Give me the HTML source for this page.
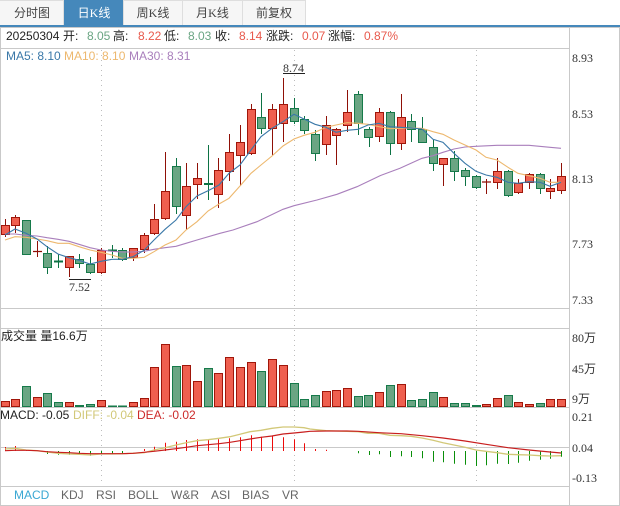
<!DOCTYPE html>
<html><head><meta charset="utf-8"><title>K</title>
<style>
html,body{margin:0;padding:0;background:#fff;width:620px;height:506px;overflow:hidden}
svg{display:block;position:absolute;left:0;top:0}
text{font-size:12px;font-family:"Liberation Sans","Noto Sans CJK SC",sans-serif;white-space:pre}
.s{font-family:"Liberation Serif","Noto Sans CJK SC",serif;fill:#333}
.t{font-family:"Liberation Serif","Noto Sans CJK SC",serif;fill:#444;text-anchor:middle}
.g{fill:#6aa583}.r{fill:#e8594c}.k{fill:#222}.b{fill:#666}
</style></head><body>
<svg width="620" height="506" viewBox="0 0 620 506" xmlns="http://www.w3.org/2000/svg">
<!-- tabs -->
<g fill="#f6f6f6" stroke="#dedede"><rect x="-1" y="0.5" width="64.5" height="25"/><rect x="123.5" y="0.5" width="59" height="25"/><rect x="182.5" y="0.5" width="60" height="25"/><rect x="242.5" y="0.5" width="63" height="25"/></g>
<rect x="64" y="0" width="59" height="26" fill="#4588bb"/>
<rect x="0" y="25" width="620" height="2" fill="#4588bb"/>
<text class="t" x="32" y="17">分时图</text><text class="t" x="94" y="17" style="fill:#fff">日K线</text><text class="t" x="153" y="17">周K线</text><text class="t" x="212.500" y="17">月K线</text><text class="t" x="274" y="17">前复权</text>
<!-- grid -->
<path d="M0.500 27V505.500M569.500 27V505.500M619.500 27V505.500M0 27.500H620M0 48.500H569M0 308.500H569M0 328.500H569M0 407.500H569M0 447.500H569M0 486.500H569M0 505.500H620" fill="none" stroke="#c9c9c9"/>
<path d="M101.500 50V484M294.500 50V484M476.500 50V484" fill="none" stroke="#bdbdbd" stroke-dasharray="1 4"/>
<!-- info -->
<text class="k" x="6" y="40">20250304</text><text class="k" x="63" y="40">开:</text><text class="g" x="87" y="40">8.05</text><text class="k" x="113" y="40">高:</text><text class="r" x="138" y="40">8.22</text><text class="k" x="164" y="40">低:</text><text class="g" x="188" y="40">8.03</text><text class="k" x="215" y="40">收:</text><text class="r" x="239" y="40">8.14</text><text class="k" x="266" y="40">涨跌:</text><text class="r" x="302" y="40">0.07</text><text class="k" x="328" y="40">涨幅:</text><text class="r" x="364" y="40">0.87%</text>
<text x="6" y="60" fill="#3a78a8">MA5: 8.10</text><text x="64" y="60" fill="#edb86e">MA10: 8.10</text><text x="129" y="60" fill="#a97fbc">MA30: 8.31</text>
<!-- axis -->
<text class="s" x="572" y="62">8.93</text><text class="s" x="572" y="118">8.53</text><text class="s" x="572" y="183">8.13</text><text class="s" x="572" y="248">7.73</text><text class="s" x="572" y="304">7.33</text>
<text class="s" x="283" y="72">8.74</text><path d="M283 73.500H305M69 279.500H91" stroke="#222" fill="none"/><text class="s" x="69" y="291">7.52</text>
<!-- wicks -->
<path fill="none" stroke="#8f1007" d="M5.500 219V237M15.500 215V233M37.500 241V257M69.500 256V277M101.500 248V274M133.500 248V261M144.500 233V253M154.500 204V235M165.500 152V220M186.500 163V230M197.500 163V199M218.500 158V208M229.500 134V181M240.500 125V186M251.500 104V155M272.500 104V155M283.500 78V142M326.500 116V155M336.500 128V165M347.500 90V132M379.500 108V142M401.500 94V150M443.500 158V186M486.500 179V194M497.500 158V189M518.500 179V194M529.500 173V189M550.500 179V199M561.500 163V194"/>
<path fill="none" stroke="#0c7244" d="M47.500 246V274M58.500 254V268M79.500 254V268M90.500 257V274M112.500 245V258M122.500 248V261M176.500 158V214M208.500 145V200M261.500 93V134M294.500 98V124M304.500 116V134M315.500 130V161M358.500 91V135M369.500 127V147M390.500 111V155M411.500 114V142M422.500 117V143M433.500 140V171M454.500 151V181M465.500 168V186M476.500 175V189M508.500 170V197M540.500 173V194"/>
<!-- bodies -->
<path fill="#ef5f4f" stroke="#a0160a" d="M1.500 225.500h8V234.500h-8zM11.500 217.500h8V225.500h-8zM65.500 256.500h8V267.500h-8zM97.500 250.500h8V272.500h-8zM129.500 248.500h8V257.500h-8zM140.500 235.500h8V249.500h-8zM150.500 219.500h8V233.500h-8zM161.500 191.500h8V218.500h-8zM182.500 186.500h8V215.500h-8zM193.500 178.500h8V184.500h-8zM214.500 170.500h8V194.500h-8zM225.500 152.500h8V171.500h-8zM236.500 142.500h8V155.500h-8zM247.500 109.500h8V153.500h-8zM268.500 109.500h8V128.500h-8zM279.500 104.500h8V123.500h-8zM322.500 125.500h8V144.500h-8zM332.500 129.500h8V135.500h-8zM343.500 112.500h8V125.500h-8zM375.500 112.500h8V136.500h-8zM397.500 117.500h8V143.500h-8zM439.500 158.500h8V164.500h-8zM493.500 171.500h8V182.500h-8zM514.500 183.500h8V192.500h-8zM525.500 174.500h8V182.500h-8zM546.500 188.500h8V191.500h-8zM557.500 176.500h8V190.500h-8z"/>
<path fill="#6aa583" stroke="#167a4a" d="M22.500 220.500h8V254.500h-8zM43.500 253.500h8V267.500h-8zM75.500 259.500h8V263.500h-8zM86.500 264.500h8V272.500h-8zM118.500 250.500h8V259.500h-8zM172.500 166.500h8V206.500h-8zM257.500 117.500h8V128.500h-8zM290.500 108.500h8V121.500h-8zM300.500 119.500h8V130.500h-8zM311.500 134.500h8V153.500h-8zM354.500 94.500h8V123.500h-8zM364.500 129.500h8V137.500h-8zM386.500 112.500h8V143.500h-8zM407.500 121.500h8V129.500h-8zM418.500 129.500h8V142.500h-8zM429.500 147.500h8V163.500h-8zM450.500 158.500h8V171.500h-8zM461.500 170.500h8V176.500h-8zM472.500 176.500h8V187.500h-8zM504.500 171.500h8V195.500h-8zM536.500 174.500h8V188.500h-8z"/>
<path fill="none" stroke="#8f1007" stroke-width="1.300" d="M33 251.500h9M482 182h9"/>
<path fill="none" stroke="#0c7244" stroke-width="2" d="M54 261.500h9M204 184h9M108 250.500h9"/>
<!-- MA -->
<polyline fill="none" stroke="#a97fbc" stroke-width="1.100" points="5,234 15,234 26,235.300 37,236 47,237.700 58,239.300 69,241.300 79,244.300 90,247.700 101,250 112,251.300 122,252 133,252 144,251.300 154,249.300 165,247.700 176,246.300 186,243.300 197,240 220,233.300 233,230 257,221.700 283,209.300 294,205.700 317,200 337,194.300 357,186.700 380,175.700 400,168.300 411,163.300 422,158.300 433,155.700 443,152.300 454,149 465,147 476,146.300 497,145.300 529,145.300 550,147.300 561,148.300"/>
<polyline fill="none" stroke="#edb86e" stroke-width="1.100" points="5,240 15,236.700 26,237.300 37,239 47,240.700 58,243.300 69,243.300 79,246.700 90,250 101,252.300 112,255 122,258.300 133,258.300 144,257.300 154,251.700 165,245 176,240 186,230 197,221.700 208,211 219,204 229,198.300 240,186 251,173.300 261,165 272,156 283,146 294,139 304,135.300 315,132.300 326,127.300 336,125 347,122.700 358,123.300 368,124.300 379,126.700 390,128.700 400,128.300 411,128 422,128.300 433,131.700 443,134.300 454,140 465,145 476,150 486,157.300 497,160 508,167.300 518,173.300 529,175.700 540,178.300 550,182.300 561,182.300"/>
<polyline fill="none" stroke="#3a78a8" stroke-width="1.100" points="5,235 15,229 26,233.300 37,239 47,246.700 58,254 69,257.700 79,260.300 90,264 101,261.300 112,259.300 122,259.300 133,256.700 144,250.300 154,240 165,229.300 176,220 186,206.700 197,196 208,190.700 219,185 229,173.300 240,165 251,150 261,136.700 272,128.300 283,121.700 294,114.300 304,119 315,124.300 326,127.300 336,132.300 347,130.300 358,129.300 368,125 379,123.300 390,126.700 400,127.300 411,128 422,129 433,139.300 443,142.300 454,153.300 465,163.300 476,171.300 486,175 497,177.300 508,182.300 518,183.300 529,181.700 540,182.300 550,186.300 561,182.300"/>
<!-- volume -->
<text x="1" y="340" fill="#222">成交量 量16.6万</text>
<text class="s" x="572" y="342">80万</text><text class="s" x="572" y="373">45万</text><text class="s" x="572" y="403">9万</text>
<path fill="#ef5f4f" stroke="#a0160a" d="M1.500 401.500h8V406.500h-8zM11.500 399.500h8V406.500h-8zM33.500 397.500h8V406.500h-8zM65.500 402.500h8V406.500h-8zM97.500 400.500h8V406.500h-8zM129.500 402.500h8V406.500h-8zM140.500 398.500h8V406.500h-8zM150.500 367.500h8V406.500h-8zM161.500 344.500h8V406.500h-8zM182.500 365.500h8V406.500h-8zM193.500 381.500h8V406.500h-8zM214.500 373.500h8V406.500h-8zM225.500 357.500h8V406.500h-8zM236.500 367.500h8V406.500h-8zM247.500 362.500h8V406.500h-8zM268.500 359.500h8V406.500h-8zM279.500 365.500h8V406.500h-8zM322.500 391.500h8V406.500h-8zM332.500 390.500h8V406.500h-8zM343.500 388.500h8V406.500h-8zM375.500 392.500h8V406.500h-8zM397.500 384.500h8V406.500h-8zM439.500 397.500h8V406.500h-8zM482.500 404.500h8V406.500h-8zM493.500 398.500h8V406.500h-8zM514.500 402.500h8V406.500h-8zM525.500 404.500h8V406.500h-8zM546.500 399.500h8V406.500h-8zM557.500 399.500h8V406.500h-8z"/>
<path fill="#6aa583" stroke="#167a4a" d="M22.500 386.500h8V406.500h-8zM43.500 393.500h8V406.500h-8zM54.500 402.500h8V406.500h-8zM75.500 405.500h8V406.500h-8zM86.500 404.500h8V406.500h-8zM108.500 406h8V406.500h-8zM118.500 406h8V406.500h-8zM172.500 366.500h8V406.500h-8zM204.500 368.500h8V406.500h-8zM257.500 371.500h8V406.500h-8zM290.500 383.500h8V406.500h-8zM300.500 399.500h8V406.500h-8zM311.500 395.500h8V406.500h-8zM354.500 396.500h8V406.500h-8zM364.500 395.500h8V406.500h-8zM386.500 385.500h8V406.500h-8zM407.500 400.500h8V406.500h-8zM418.500 399.500h8V406.500h-8zM429.500 392.500h8V406.500h-8zM450.500 403.500h8V406.500h-8zM461.500 403.500h8V406.500h-8zM472.500 405.500h8V406.500h-8zM504.500 395.500h8V406.500h-8zM536.500 403.500h8V406.500h-8z"/>
<!-- MACD -->
<text x="0" y="419" fill="#222">MACD: -0.05</text><text x="73" y="419" fill="#d2c878">DIFF: -0.04</text><text x="137" y="419" fill="#cc2a2a">DEA: -0.02</text>
<text class="s" x="572" y="421">0.21</text><text class="s" x="572" y="452">0.04</text><text class="s" x="572" y="482">-0.13</text>
<path fill="none" stroke="#ee0a0a" d="M5.500 447V451M15.500 446V451M26.500 449.700V451M144.500 449V451M154.500 446.700V451M165.500 442.700V451M176.500 441.700V451M186.500 440V451M197.500 439.300V451M208.500 440V451M218.500 439.300V451M229.500 438.300V451M240.500 437.300V451M251.500 435.300V451M261.500 436.700V451M272.500 436V451M283.500 437.300V451M294.500 439.300V451M304.500 443.300V451M315.500 449V451M326.500 449.700V451"/>
<path fill="none" stroke="#0a8f0a" d="M47.500 451V454M58.500 451V454.700M69.500 451V454.700M79.500 451V454.700M90.500 451V455.700M101.500 451V454M112.500 451V453.300M122.500 451V453.300M358.500 451V453.300M369.500 451V455M379.500 451V454.300M390.500 451V457M401.500 451V456.300M411.500 451V457M422.500 451V458.300M433.500 451V461.700M443.500 451V462.300M454.500 451V463.700M465.500 451V464.700M476.500 451V466M486.500 451V465.300M497.500 451V463.700M508.500 451V464M518.500 451V462.700M529.500 451V460.700M540.500 451V459.700M550.500 451V458.700M561.500 451V456.700"/>
<polyline fill="none" stroke="#d2c878" stroke-width="1.300" points="5,449 15,448.300 26,450 37,450.700 47,452 58,453.300 69,454 79,454.300 90,455 101,454 112,454 122,453.700 133,453.300 144,452.700 154,450 165,447.700 176,445 186,442.700 197,440.700 208,439.700 219,438.300 230,436.700 240,434.300 250,431.700 261,430.300 272,428.300 283,427 294,427 304,427.700 310,429 326,430.700 336,431 347,431.300 358,431.700 368,433.300 379,433.300 390,435.300 401,435.700 411,436.300 422,438 433,440.300 443,442.700 454,445 465,447.300 476,450 486,451.300 497,452.700 508,454.300 518,454.700 529,455 540,455.700 550,456 561,455.700"/>
<polyline fill="none" stroke="#c81e1e" stroke-width="1.200" points="5,450.700 15,450.300 26,450.300 37,450.700 47,451.700 58,452.300 69,452.700 79,453.300 90,453.700 101,453.700 112,453.700 122,453.700 133,453.300 144,452.300 154,451.300 165,450 176,448.700 186,447.300 197,445.700 208,444.700 219,443.700 230,442.300 240,440.700 250,439 261,437.300 272,436 283,434 294,433 304,432 310,431.300 326,431 347,431 358,431.300 379,432.700 401,433.700 422,435.700 443,438 465,441 486,444.300 508,447.700 529,450 550,452 561,453"/>
<!-- bottom tabs -->
<text x="14" y="499" fill="#3aa7d3">MACD</text><text class="b" x="61" y="499">KDJ</text><text class="b" x="96" y="499">RSI</text><text class="b" x="128" y="499">BOLL</text><text class="b" x="171" y="499">W&amp;R</text><text class="b" x="211" y="499">ASI</text><text class="b" x="242" y="499">BIAS</text><text class="b" x="282" y="499">VR</text>
</svg>
</body></html>
